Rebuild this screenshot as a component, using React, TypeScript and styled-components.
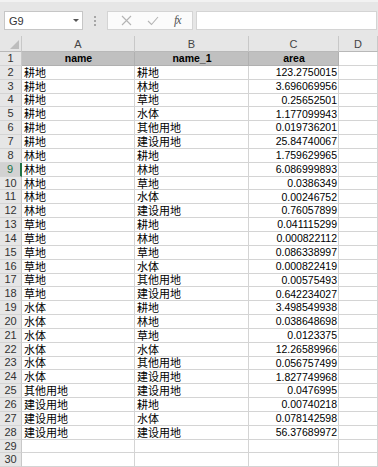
import React from "react";
import styled, { createGlobalStyle } from "styled-components";

const Global = createGlobalStyle`
  html, body { margin: 0; padding: 0; background: #ffffff; }
  body { font-family: "Liberation Sans", Arial, sans-serif; overflow: hidden; }
`;

const ROW_H = 13.85;

const Page = styled.div`
  width: 378px;
  height: 467px;
  overflow: hidden;
  background: #ffffff;
`;

const Toolbar = styled.div`
  border-top: 2px solid #f2f2f2;
  background: #e6e6e6;
  display: flex;
  align-items: flex-start;
  padding: 9px 0 0 4px;
  box-sizing: border-box;
  height: 36px;
`;

const NameBox = styled.div`
  width: 79px;
  height: 19px;
  box-sizing: border-box;
  background: #ffffff;
  border: 1px solid #c6c6c6;
  display: flex;
  align-items: center;
  justify-content: space-between;
  padding: 0 3px 0 4px;
  font-size: 11px;
  color: #333333;
`;

const Caret = styled.span`
  width: 0;
  height: 0;
  border-left: 3px solid transparent;
  border-right: 3px solid transparent;
  border-top: 3px solid #555555;
`;

const Grip = styled.div`
  width: 24px;
  height: 19px;
  display: flex;
  flex-direction: column;
  align-items: center;
  justify-content: center;
  gap: 2px;
`;

const Dot = styled.span`
  width: 2px;
  height: 2px;
  background: #a6a6a6;
`;

const FxBox = styled.div`
  width: 86px;
  height: 19px;
  box-sizing: border-box;
  background: #fbfbfb;
  border: 1px solid #d4d4d4;
  display: flex;
  align-items: center;
  justify-content: space-around;
  padding: 0 4px 0 6px;
`;

const FxText = styled.span`
  font-family: "Liberation Serif", "Times New Roman", serif;
  font-style: italic;
  font-size: 12px;
  color: #555555;
  letter-spacing: -1px;
`;

const FormulaInput = styled.div`
  flex: 1;
  height: 19px;
  margin-left: 3px;
  margin-right: 1px;
  box-sizing: border-box;
  background: #ffffff;
  border: 1px solid #d4d4d4;
`;

const Sheet = styled.div`
  display: grid;
  grid-template-columns: 22px 113px 114px 90px 1fr;
  grid-auto-rows: ${ROW_H}px;
  grid-template-rows: 16px;
`;

const Corner = styled.div`
  background: #e6e6e6;
  border-right: 1px solid #c8c8c8;
  border-bottom: 1px solid #b8b8b8;
  box-sizing: border-box;
  position: relative;
`;

const CornerTri = styled.span`
  position: absolute;
  right: 2px;
  bottom: 2px;
  width: 0;
  height: 0;
  border-left: 9px solid transparent;
  border-bottom: 9px solid #bdbdbd;
`;

const ColHead = styled.div`
  background: #e6e6e6;
  border-right: 1px solid #c8c8c8;
  border-bottom: 1px solid #b8b8b8;
  box-sizing: border-box;
  display: flex;
  align-items: center;
  justify-content: center;
  font-size: 11px;
  color: #444444;
`;

const RowHead = styled.div<{ $selected?: boolean }>`
  background: ${(p) => (p.$selected ? "#d2d2d2" : "#e6e6e6")};
  color: ${(p) => (p.$selected ? "#217346" : "#333333")};
  border-right: ${(p) => (p.$selected ? "2px solid #217346" : "1px solid #c8c8c8")};
  border-bottom: 1px solid #d4d4d4;
  box-sizing: border-box;
  display: flex;
  align-items: center;
  justify-content: center;
  font-size: 11px;
  line-height: 1;
`;

const Cell = styled.div<{ $align?: "left" | "right" | "center"; $head?: boolean; $cjk?: boolean }>`
  background: ${(p) => (p.$head ? "#c0c0c0" : "#ffffff")};
  border-right: 1px solid ${(p) => (p.$head ? "#b0b0b0" : "#d4d4d4")};
  border-bottom: 1px solid ${(p) => (p.$head ? "#b0b0b0" : "#d4d4d4")};
  box-sizing: border-box;
  display: flex;
  align-items: center;
  justify-content: ${(p) =>
    p.$align === "right" ? "flex-end" : p.$align === "center" ? "center" : "flex-start"};
  padding: 0 1px 0 2px;
  font-family: ${(p) =>
    p.$cjk
      ? '"Noto Sans CJK SC", "Liberation Sans", sans-serif'
      : '"Liberation Sans", Arial, sans-serif'};
  font-size: ${(p) => (p.$cjk ? "11px" : "10.5px")};
  font-weight: ${(p) => (p.$head ? 700 : 400)};
  color: #000000;
  white-space: nowrap;
  line-height: 1;
`;

const rows: [string, string, string][] = [
  ["耕地", "耕地", "123.2750015"],
  ["耕地", "林地", "3.696069956"],
  ["耕地", "草地", "0.25652501"],
  ["耕地", "水体", "1.177099943"],
  ["耕地", "其他用地", "0.019736201"],
  ["耕地", "建设用地", "25.84740067"],
  ["林地", "耕地", "1.759629965"],
  ["林地", "林地", "6.086999893"],
  ["林地", "草地", "0.0386349"],
  ["林地", "水体", "0.00246752"],
  ["林地", "建设用地", "0.76057899"],
  ["草地", "耕地", "0.041115299"],
  ["草地", "林地", "0.000822112"],
  ["草地", "草地", "0.086338997"],
  ["草地", "水体", "0.000822419"],
  ["草地", "其他用地", "0.00575493"],
  ["草地", "建设用地", "0.642234027"],
  ["水体", "耕地", "3.498549938"],
  ["水体", "林地", "0.038648698"],
  ["水体", "草地", "0.0123375"],
  ["水体", "水体", "12.26589966"],
  ["水体", "其他用地", "0.056757499"],
  ["水体", "建设用地", "1.827749968"],
  ["其他用地", "建设用地", "0.0476995"],
  ["建设用地", "耕地", "0.00740218"],
  ["建设用地", "水体", "0.078142598"],
  ["建设用地", "建设用地", "56.37689972"],
];

const XIcon = () => (
  <svg width="11" height="11" viewBox="0 0 11 11">
    <path d="M1 1 L10 10 M10 1 L1 10" stroke="#b4b4b4" strokeWidth="1.1" fill="none" />
  </svg>
);

const CheckIcon = () => (
  <svg width="12" height="10" viewBox="0 0 12 10">
    <path d="M1 5 L4.5 8.5 L11 1" stroke="#b4b4b4" strokeWidth="1.1" fill="none" />
  </svg>
);

export default function App() {
  return (
    <Page>
      <Global />
      <Toolbar>
        <NameBox>
          <span>G9</span>
          <Caret />
        </NameBox>
        <Grip>
          <Dot />
          <Dot />
          <Dot />
        </Grip>
        <FxBox>
          <XIcon />
          <CheckIcon />
          <FxText>fx</FxText>
        </FxBox>
        <FormulaInput />
      </Toolbar>
      <Sheet>
        <Corner>
          <CornerTri />
        </Corner>
        <ColHead>A</ColHead>
        <ColHead>B</ColHead>
        <ColHead>C</ColHead>
        <ColHead>D</ColHead>

        <RowHead>1</RowHead>
        <Cell $head $align="center">name</Cell>
        <Cell $head $align="center">name_1</Cell>
        <Cell $head $align="center">area</Cell>
        <Cell />

        {rows.map((r, i) => (
          <React.Fragment key={i}>
            <RowHead $selected={i + 2 === 9}>{i + 2}</RowHead>
            <Cell $cjk>{r[0]}</Cell>
            <Cell $cjk>{r[1]}</Cell>
            <Cell $align="right">{r[2]}</Cell>
            <Cell />
          </React.Fragment>
        ))}

        {[29, 30].map((n) => (
          <React.Fragment key={n}>
            <RowHead>{n}</RowHead>
            <Cell />
            <Cell />
            <Cell />
            <Cell />
          </React.Fragment>
        ))}
      </Sheet>
    </Page>
  );
}
